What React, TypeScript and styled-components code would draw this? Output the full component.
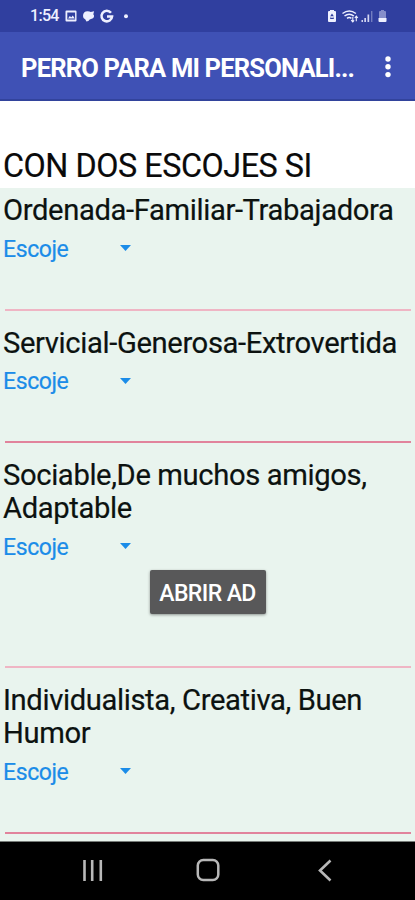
import React from 'react';
import styled, { createGlobalStyle } from 'styled-components';

const GlobalStyle = createGlobalStyle`
  * { box-sizing: border-box; }
  body { margin: 0; background: #000; font-family: Roboto, sans-serif; overflow: hidden; }
`;

const Screen = styled.div`
  width: 415px;
  height: 900px;
  display: flex;
  flex-direction: column;
  overflow: hidden;
`;

const StatusBar = styled.header`
  height: 32px;
  flex: none;
  padding: 0 26px 0 30px;
  display: flex;
  align-items: center;
  justify-content: space-between;
  background: #303f9f;
  color: #eef0ff;
`;

const StatusGroup = styled.div`
  display: flex;
  align-items: center;
  svg { display: block; }
`;

const Clock = styled.span`
  width: 35px;
  font-size: 16px;
  line-height: 32px;
  font-weight: 500;
  letter-spacing: -0.7px;
  white-space: nowrap;
`;

const AppBar = styled.div`
  height: 69px;
  flex: none;
  padding: 3px 16px 0 21px;
  display: flex;
  align-items: center;
  justify-content: space-between;
  background: #3f51b5;
  border-bottom: 2px solid #32439c;
`;

const AppTitle = styled.h1`
  margin: 0;
  width: 336px;
  padding-top: 2px;
  font-size: 25.5px;
  line-height: 34px;
  font-weight: 700;
  letter-spacing: -0.8px;
  color: #fff;
  white-space: nowrap;
`;

const MenuButton = styled.button`
  width: 22px;
  height: 32px;
  padding: 0;
  border: 0;
  background: none;
  svg { display: block; }
`;

const HeadingBand = styled.div`
  height: 87px;
  flex: none;
  padding: 46px 0 0 3px;
  background: #fff;
`;

const Heading = styled.h2`
  margin: 0;
  font-size: 32.3px;
  line-height: 39px;
  font-weight: 400;
  letter-spacing: -0.45px;
  color: #0a0a0a;
  -webkit-text-stroke: 0.2px #0a0a0a;
  white-space: nowrap;
`;

const Content = styled.main`
  flex: 1;
  overflow: hidden;
  background: #e9f4ee;
`;

const Section = styled.section<{ $height: number; $first?: boolean }>`
  height: ${p => p.$height}px;
  padding: ${p => (p.$first ? 6 : 15.5)}px 4px 0 3px;
  display: flex;
  flex-direction: column;
`;

const Question = styled.p`
  margin: 0;
  font-size: 29.2px;
  line-height: 33.3px;
  letter-spacing: -0.37px;
  color: #0c1210;
  -webkit-text-stroke: 0.2px #0c1210;
  white-space: pre-line;
`;

const Picker = styled.button`
  width: 130px;
  height: 32px;
  margin-top: 5px;
  padding: 0 2px 0 0;
  flex: none;
  border: 0;
  background: none;
  display: flex;
  align-items: center;
  justify-content: space-between;
  color: #1b8ce8;
  font: 400 23px/32px Roboto, sans-serif;
  letter-spacing: -0.4px;
  -webkit-text-stroke: 0.2px #1b8ce8;
`;

const PickerLabel = styled.span`
  padding-top: 3px;
`;

const AdButton = styled.button`
  align-self: center;
  width: 116px;
  height: 44px;
  margin: 8px 0 0 1px;
  padding: 3px 0 0;
  border: 0;
  border-radius: 2px;
  background: #585859;
  box-shadow: 0 1px 3px rgba(0, 0, 0, 0.4);
  color: #fff;
  font: 500 23px/41px Roboto, sans-serif;
  letter-spacing: -0.6px;
  white-space: nowrap;
`;

const Divider = styled.hr<{ $strong?: boolean }>`
  width: 406px;
  height: 2px;
  flex: none;
  margin: auto 0 0 2px;
  border: 0;
  background: ${p => (p.$strong ? '#e1839c' : '#efb5c4')};
`;

const NavBar = styled.nav`
  height: 59px;
  flex: none;
  padding: 0 79px 2px 80px;
  display: flex;
  align-items: center;
  justify-content: space-between;
  background: #000;
  border-top: 1px solid #777c79;
  svg { display: block; }
`;

const NotificationIcons = () => (
  <svg width="66" height="16" viewBox="0 0 66 16" fill="currentColor">
    <path fillRule="evenodd" d="M1.5 2.5h9q1 0 1 1v9q0 1-1 1h-9q-1 0-1-1v-9q0-1 1-1zM2.3 4.6v6.8h7.8V4.6zM3 10.6l1.8-2.7 1.5 1.3 1.5-1.8 2 3.2z" />
    <path d="M18 8q0-4.7 4.7-4.8 2 0 3 .8l3.4-.7-.8 3Q30 8 28 10.3l-3.3 1.1q-1 2-3.3 2l-1-1.8Q18 11 18 8z" />
    <path d="M46 4.8A5.3 5.3 0 1 0 47.1 8.4H42" fill="none" stroke="currentColor" strokeWidth="2.5" />
    <circle cx="61" cy="8.2" r="2" />
  </svg>
);

const SystemIcons = () => (
  <svg width="62" height="16" viewBox="0 0 62 16" fill="currentColor">
    <path fillRule="evenodd" d="M3 2h4v1h1q1 0 1 1v9q0 1-1 1H2q-1 0-1-1V4q0-1 1-1h1zM5 5.5 3.2 8.3h.9L3 11h4l-1.1-2.7h.9z" />
    <circle cx="5" cy="9" r="1" />
    <g fill="none" stroke="currentColor" strokeWidth="1.5">
      <path d="M15.5 5.5q6.7-5 13.4 0M17.5 8q4.7-3.7 9.4 0M20 10.4q2.2-1.6 4.4 0" />
      <path d="M25.8 8.8v5m-1.6-1.7 1.6 1.8 1.3-1.5M29.3 13.2v-5m-1.5 1.8 1.5-1.8 1.6 1.8" strokeWidth="1.1" />
    </g>
    <path d="M34.5 12H36v2h-1.5zM37.3 10H39v4h-1.7zM40.5 6.5h1.7V14h-1.7z" opacity=".85" />
    <path d="M44 3h1.4v11H44z" opacity=".35" />
    <path d="M53 3h1V2h3v1h1q1 0 1 1v6h-7V4q0-1 1-1z" opacity=".45" />
    <path d="M51.5 10h8v3q0 1-1 1h-6q-1 0-1-1z" />
  </svg>
);

type QuestionData = { text: string; height: number; strong?: boolean; ad?: boolean };

const questions: QuestionData[] = [
  { text: 'Ordenada-Familiar-Trabajadora', height: 123 },
  { text: 'Servicial-Generosa-Extrovertida', height: 132, strong: true },
  { text: 'Sociable,De muchos amigos,\nAdaptable', height: 225, ad: true },
  { text: 'Individualista, Creativa, Buen\nHumor', height: 166, strong: true },
];

export default function App() {
  return (
    <Screen>
      <GlobalStyle />
      <StatusBar>
        <StatusGroup><Clock>1:54</Clock><NotificationIcons /></StatusGroup>
        <StatusGroup><SystemIcons /></StatusGroup>
      </StatusBar>
      <AppBar>
        <AppTitle>PERRO PARA MI PERSONALI...</AppTitle>
        <MenuButton aria-label="Menu">
          <svg width="22" height="32" fill="#fff">
            <circle cx="11" cy="8" r="2.7" />
            <circle cx="11" cy="15.8" r="2.7" />
            <circle cx="11" cy="23.6" r="2.7" />
          </svg>
        </MenuButton>
      </AppBar>
      <HeadingBand><Heading>CON DOS ESCOJES SI</Heading></HeadingBand>
      <Content>
        {questions.map((q, i) => (
          <Section key={q.text} $height={q.height} $first={i === 0}>
            <Question>{q.text}</Question>
            <Picker>
              <PickerLabel>Escoje</PickerLabel>
              <svg width="11" height="6"><path d="M0 0h11L5.5 6z" fill="#1b8ce8" /></svg>
            </Picker>
            {q.ad && <AdButton>ABRIR AD</AdButton>}
            <Divider $strong={q.strong} />
          </Section>
        ))}
      </Content>
      <NavBar>
        <svg width="24" height="24" stroke="#b8b8b8" strokeWidth="2.6"><path d="M4.5 2v21M12.2 2v21M20.8 2v21" /></svg>
        <svg width="24" height="24" fill="none" stroke="#b8b8b8" strokeWidth="2.5"><rect x="1.8" y="2" width="20.5" height="20" rx="5.5" /></svg>
        <svg width="24" height="24" fill="none" stroke="#b8b8b8" strokeWidth="2.6"><path d="M18.5 2.5 8 12.5l10.5 10" /></svg>
      </NavBar>
    </Screen>
  );
}
